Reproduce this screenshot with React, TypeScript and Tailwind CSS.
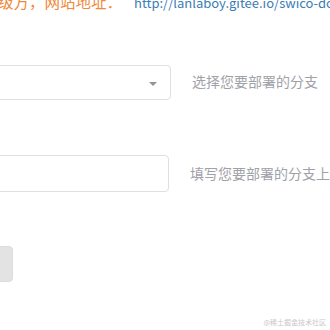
export default function App() {
  return (
    <div className="w-[330px] h-[330px] overflow-hidden bg-white relative font-['Microsoft_YaHei','Noto_Sans_CJK_SC',sans-serif]">
      <div className="-mt-[9px] -ml-[2px] leading-[20px] whitespace-nowrap flex items-baseline">
        <span className="text-[15.5px] text-[#f08a3c]">级方，网站地址：</span>
        <span className="text-[13px] text-[#3b7db5] ml-[12px]">http://lanlaboy.gitee.io/swico-doc</span>
      </div>
      <div className="mt-[52px] flex items-center">
        <div className="-ml-[30px] w-[201px] h-[35px] border border-[#dcdfe6] rounded-[4px] flex items-center justify-end pr-[13px]">
          <div className="w-0 h-0 mt-[2px] border-l-[4px] border-r-[4px] border-t-[4px] border-l-transparent border-r-transparent border-t-[#909399]" />
        </div>
        <div className="ml-[21px] -mt-[2px] text-[14px] text-[#a0a2a8] whitespace-nowrap">选择您要部署的分支</div>
      </div>
      <div className="mt-[55px] flex items-center">
        <div className="-ml-[30px] w-[201px] h-[37px] border border-[#dcdfe6] rounded-[4px]" />
        <div className="ml-[21px] -mt-[1px] text-[14px] text-[#a0a2a8] whitespace-nowrap">填写您要部署的分支上</div>
      </div>
      <div className="mt-[54px] -ml-[30px] w-[43px] h-[36px] bg-[#e3e3e3] border border-[#dcdcdc] rounded-[4px]" />
      <div className="absolute right-[4px] bottom-[3px] text-[7px] text-[#c8c8c8] whitespace-nowrap">@稀土掘金技术社区</div>
    </div>
  );
}
